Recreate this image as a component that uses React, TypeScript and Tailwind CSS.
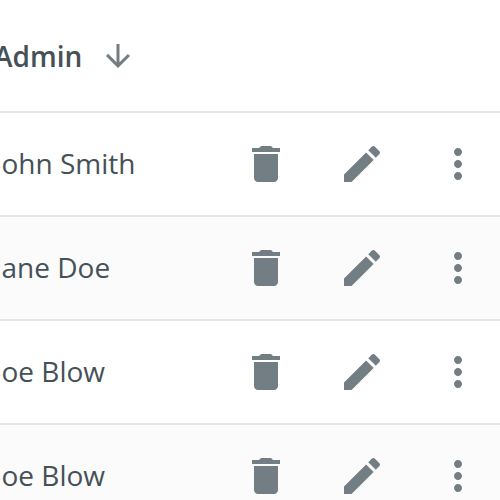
import React from "react";

const rows = ["John Smith", "Jane Doe", "Joe Blow", "Joe Blow"];

function Icon({ d, className = "size-12" }: { d: string; className?: string }) {
  return (
    <svg viewBox="0 0 24 24" className={`shrink-0 fill-[#727e83] ${className}`}>
      <path d={d} />
    </svg>
  );
}

const arrow = "M20 12l-1.41-1.41L13 16.17V4h-2v12.17l-5.58-5.59L4 12l8 8 8-8z";
const trash = "M6 19c0 1.1.9 2 2 2h8c1.1 0 2-.9 2-2V7H6v12zM19 4h-3.5l-1-1h-5l-1 1H5v2h14V4z";
const pencil =
  "M3 17.25V21h3.75L17.81 9.94l-3.75-3.75L3 17.25zM20.71 7.04c.39-.39.39-1.02 0-1.41l-2.34-2.34c-.39-.39-1.02-.39-1.41 0l-1.83 1.83 3.75 3.75 1.83-1.83z";
const dots =
  "M12 8c1.1 0 2-.9 2-2s-.9-2-2-2-2 .9-2 2 .9 2 2 2zm0 2c-1.1 0-2 .9-2 2s.9 2 2 2 2-.9 2-2-.9-2-2-2zm0 6c-1.1 0-2 .9-2 2s.9 2 2 2 2-.9 2-2-.9-2-2-2z";

export default function App() {
  return (
    <div className="h-[500px] w-[500px] overflow-hidden bg-white font-['Open_Sans',sans-serif] text-[28px] leading-[40px] text-[#455157]">
      <div className="flex h-[113px] items-center border-b-2 border-[#e6e6e6] pt-px">
        <span className="-ml-1.5 w-[106px] shrink-0 whitespace-nowrap font-semibold">Admin</span>
        <Icon d={arrow} className="size-9" />
      </div>
      {rows.map((name, i) => (
        <div
          key={i}
          className="flex h-[104px] items-center border-b-2 border-[#e6e6e6] odd:bg-[#fbfbfb]"
        >
          <span className="-ml-1.5 w-[248px] shrink-0 whitespace-nowrap pb-0.5">{name}</span>
          <div className="flex gap-12">
            <Icon d={trash} />
            <Icon d={pencil} />
            <Icon d={dots} />
          </div>
        </div>
      ))}
    </div>
  );
}
